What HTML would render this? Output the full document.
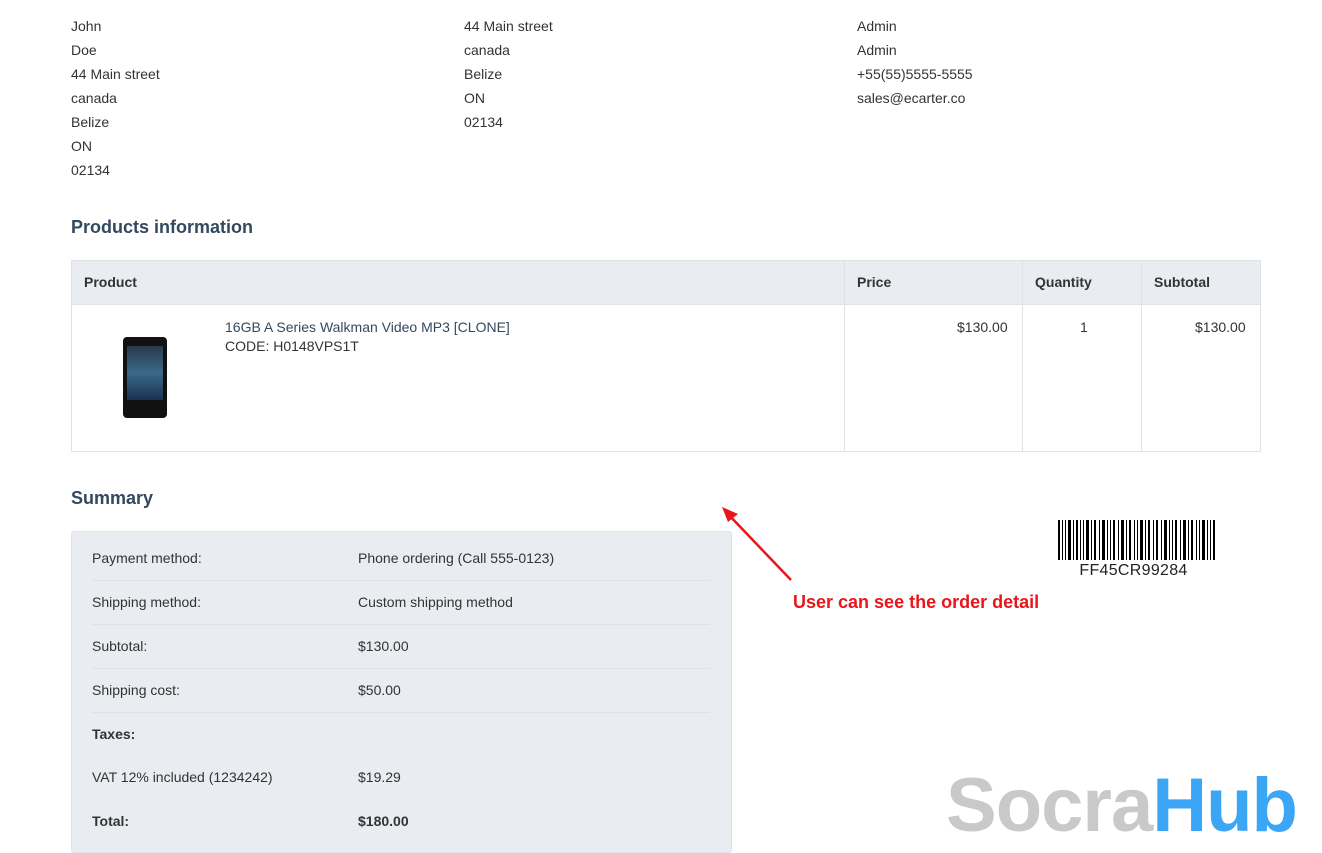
<!DOCTYPE html>
<html><head><meta charset="utf-8"><style>
body{margin:0;width:1322px;height:841px;overflow:hidden;background:#fff;font-family:"Liberation Sans",sans-serif;font-size:14px;color:#333;position:relative}
.a{position:absolute}
.col div{height:24px;line-height:24px}
h3{position:absolute;margin:0;font-size:18px;font-weight:bold;color:#34495e}
.row{position:absolute;left:92px;width:618px;height:44px;line-height:44px;border-bottom:1px solid #dfe3e8}
.row span{position:absolute;left:266px}
</style></head><body>
<div class="a col" style="left:71px;top:14px"><div>John</div><div>Doe</div><div>44 Main street</div><div>canada</div><div>Belize</div><div>ON</div><div>02134</div></div>
<div class="a col" style="left:464px;top:14px"><div>44 Main street</div><div>canada</div><div>Belize</div><div>ON</div><div>02134</div></div>
<div class="a col" style="left:857px;top:14px"><div>Admin</div><div>Admin</div><div>+55(55)5555-5555</div><div>sales@ecarter.co</div></div>
<h3 style="left:71px;top:217px">Products information</h3>
<div class="a" style="left:71px;top:260px;width:1188px;height:190px;border:1px solid #dfe3e8"></div>
<div class="a" style="left:72px;top:261px;width:1188px;height:43px;background:#e9ecf0;border-bottom:1px solid #dfe3e8"></div>
<div class="a" style="left:844px;top:261px;width:1px;height:190px;background:#dfe3e8"></div>
<div class="a" style="left:1022px;top:261px;width:1px;height:190px;background:#dfe3e8"></div>
<div class="a" style="left:1141px;top:261px;width:1px;height:190px;background:#dfe3e8"></div>
<div class="a" style="left:84px;top:274px;font-weight:bold">Product</div>
<div class="a" style="left:857px;top:274px;font-weight:bold">Price</div>
<div class="a" style="left:1035px;top:274px;font-weight:bold">Quantity</div>
<div class="a" style="left:1154px;top:274px;font-weight:bold">Subtotal</div>
<div class="a" style="left:123px;top:337px;width:44px;height:81px;background:#111;border-radius:4px"><div class="a" style="left:4px;top:9px;width:36px;height:54px;background:linear-gradient(#2a3a4a,#3a6a8a,#1a3050)"></div></div>
<div class="a" style="left:225px;top:319px;color:#34495e">16GB A Series Walkman Video MP3 [CLONE]</div>
<div class="a" style="left:225px;top:338px">CODE: H0148VPS1T</div>
<div class="a" style="left:957px;top:319px">$130.00</div>
<div class="a" style="left:1080px;top:319px">1</div>
<div class="a" style="left:1195px;top:319px">$130.00</div>
<h3 style="left:71px;top:488px">Summary</h3>
<div class="a" style="left:71px;top:531px;width:659px;height:320px;background:#e9ecf0;border:1px solid #dfe3e8;border-radius:3px"></div>
<div class="row" style="top:536px">Payment method:<span>Phone ordering (Call 555-0123)</span></div>
<div class="row" style="top:580px">Shipping method:<span>Custom shipping method</span></div>
<div class="row" style="top:624px">Subtotal:<span>$130.00</span></div>
<div class="row" style="top:668px">Shipping cost:<span>$50.00</span></div>
<div class="row" style="top:712px;border:0;font-weight:bold">Taxes:</div>
<div class="row" style="top:755px;border:0">VAT 12% included (1234242)<span>$19.29</span></div>
<div class="row" style="top:799px;border:0;font-weight:bold">Total:<span>$180.00</span></div>
<svg class="a" style="left:1058px;top:520px" width="157" height="40">
<g fill="#000">
<rect x="0" width="2" height="40"/><rect x="4" width="1" height="40"/><rect x="7" width="1" height="40"/><rect x="10" width="3" height="40"/><rect x="15" width="1" height="40"/><rect x="18" width="2" height="40"/><rect x="22" width="1" height="40"/><rect x="25" width="1" height="40"/><rect x="28" width="3" height="40"/><rect x="33" width="1" height="40"/><rect x="36" width="2" height="40"/><rect x="41" width="1" height="40"/><rect x="44" width="3" height="40"/><rect x="49" width="1" height="40"/><rect x="52" width="1" height="40"/><rect x="55" width="2" height="40"/><rect x="60" width="1" height="40"/><rect x="63" width="3" height="40"/><rect x="68" width="1" height="40"/><rect x="71" width="2" height="40"/><rect x="76" width="1" height="40"/><rect x="79" width="1" height="40"/><rect x="82" width="3" height="40"/><rect x="87" width="1" height="40"/><rect x="90" width="2" height="40"/><rect x="95" width="1" height="40"/><rect x="98" width="2" height="40"/><rect x="103" width="1" height="40"/><rect x="106" width="3" height="40"/><rect x="111" width="1" height="40"/><rect x="114" width="1" height="40"/><rect x="117" width="2" height="40"/><rect x="122" width="1" height="40"/><rect x="125" width="3" height="40"/><rect x="130" width="1" height="40"/><rect x="133" width="2" height="40"/><rect x="138" width="1" height="40"/><rect x="141" width="1" height="40"/><rect x="144" width="3" height="40"/><rect x="149" width="1" height="40"/><rect x="152" width="1" height="40"/><rect x="155" width="2" height="40"/>
</g></svg>
<div class="a" style="left:1055px;top:562px;width:157px;text-align:center;font-size:16px;color:#222;letter-spacing:0.3px">FF45CR99284</div>
<svg class="a" style="left:710px;top:500px" width="90" height="90"><line x1="81" y1="80" x2="16" y2="12" stroke="#e8161b" stroke-width="2.5"/><polygon points="12,7 28,14 18,22" fill="#e8161b"/></svg>
<div class="a" style="left:793px;top:592px;color:#e8161b;font-weight:bold;font-size:18px">User can see the order detail</div>
<div class="a" style="left:946px;top:768px;font-size:76px;font-weight:bold;font-family:'Liberation Sans',sans-serif;letter-spacing:-1px;line-height:1;white-space:nowrap"><span style="color:#c9c9c9">Socra</span><span style="color:#3aa6f5">Hub</span></div>
</body></html>
